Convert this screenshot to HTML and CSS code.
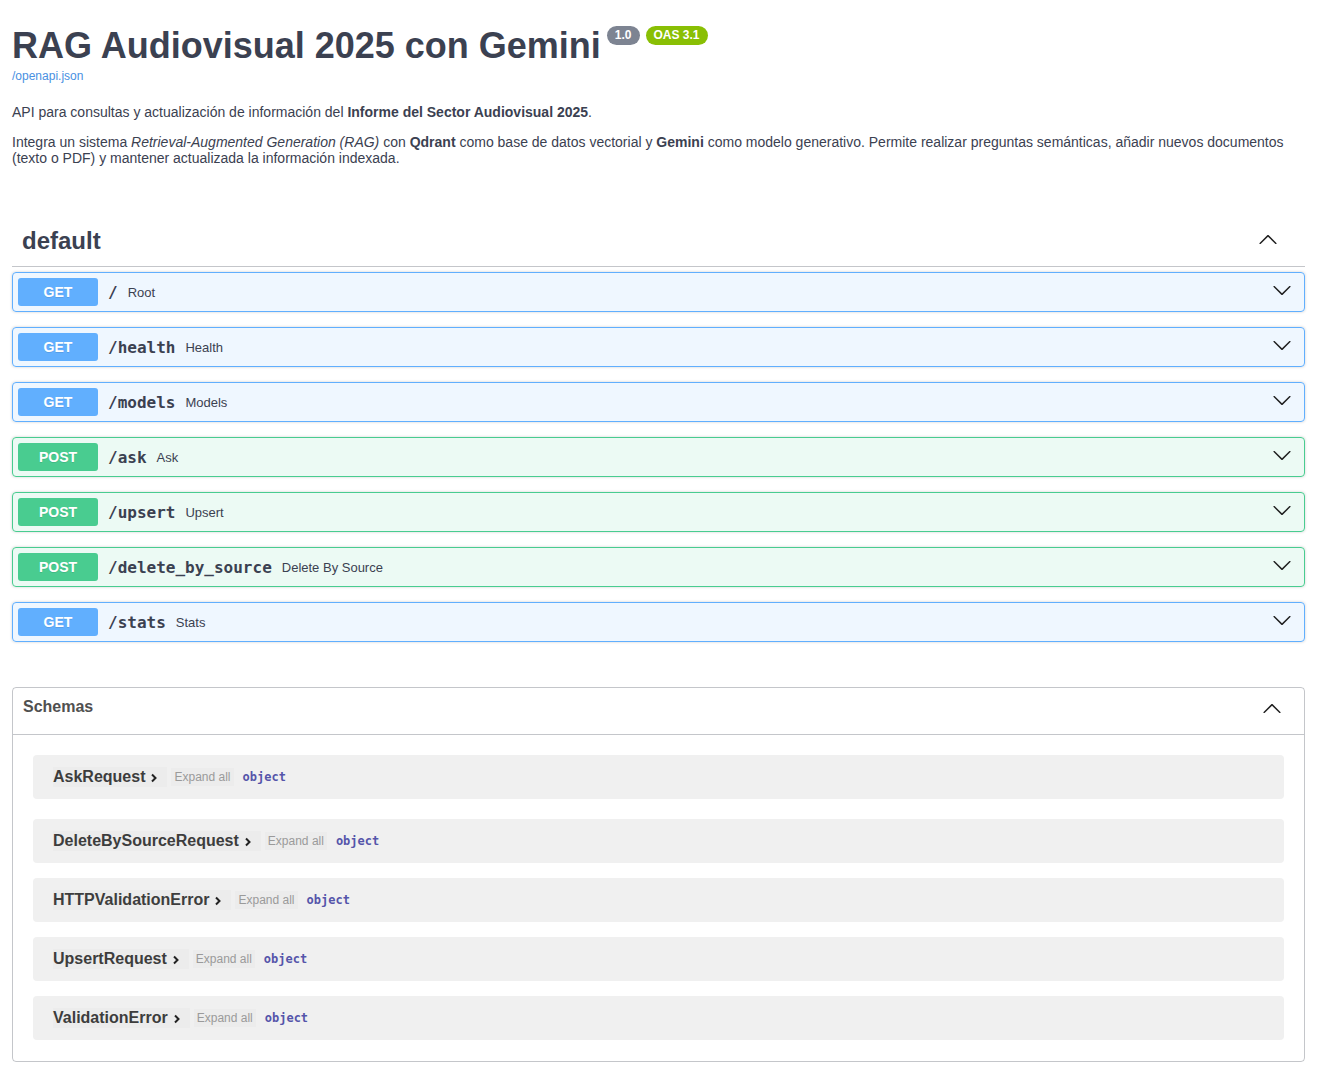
FILE: index.html
```html
<!DOCTYPE html>
<html lang="es">
<head>
<meta charset="utf-8">
<title>RAG Audiovisual 2025 con Gemini</title>
<link rel="stylesheet" href="styles.css">
</head>
<body>
<div class="wrapper">
  <section class="info">
    <div class="title-row">
      <h2 class="title">RAG Audiovisual 2025 con Gemini</h2>
      <span class="badge badge-version">1.0</span>
      <span class="badge badge-oas">OAS 3.1</span>
    </div>
    <a class="spec-link" href="#">/openapi.json</a>
    <p class="desc desc-first">API para consultas y actualización de información del <strong>Informe del Sector Audiovisual 2025</strong>.</p>
    <p class="desc">Integra un sistema <em>Retrieval-Augmented Generation (RAG)</em> con <strong>Qdrant</strong> como base de datos vectorial y <strong>Gemini</strong> como modelo generativo. Permite realizar preguntas semánticas, añadir nuevos documentos (texto o PDF) y mantener actualizada la información indexada.</p>
  </section>

  <section class="tag-section">
    <div class="tag-header">
      <h3 class="tag-name">default</h3>
      <svg class="arrow arrow-up" width="20" height="20" viewBox="0 0 20 20"><path d="M17.418 14.908c.272.268.709.268.979 0s.271-.701 0-.969l-7.908-7.83c-.27-.268-.707-.268-.979 0l-7.908 7.83c-.27.268-.27.701 0 .969.271.268.709.268.979 0L10 7.767l7.418 7.141z"/></svg>
    </div>

    <div class="opblock get">
      <span class="method">GET</span>
      <span class="path">/</span>
      <span class="summary">Root</span>
      <svg class="arrow arrow-down" width="20" height="20" viewBox="0 0 20 20"><path d="M17.418 6.109c.272-.268.709-.268.979 0s.271.701 0 .969l-7.908 7.83c-.27.268-.707.268-.979 0l-7.908-7.830c-.27-.268-.27-.701 0-.969.271-.268.709-.268.979 0L10 13.25l7.418-7.141z"/></svg>
    </div>
    <div class="opblock get">
      <span class="method">GET</span>
      <span class="path">/health</span>
      <span class="summary">Health</span>
      <svg class="arrow arrow-down" width="20" height="20" viewBox="0 0 20 20"><path d="M17.418 6.109c.272-.268.709-.268.979 0s.271.701 0 .969l-7.908 7.83c-.27.268-.707.268-.979 0l-7.908-7.83c-.27-.268-.27-.701 0-.969.271-.268.709-.268.979 0L10 13.25l7.418-7.141z"/></svg>
    </div>
    <div class="opblock get">
      <span class="method">GET</span>
      <span class="path">/models</span>
      <span class="summary">Models</span>
      <svg class="arrow arrow-down" width="20" height="20" viewBox="0 0 20 20"><path d="M17.418 6.109c.272-.268.709-.268.979 0s.271.701 0 .969l-7.908 7.83c-.27.268-.707.268-.979 0l-7.908-7.83c-.27-.268-.27-.701 0-.969.271-.268.709-.268.979 0L10 13.25l7.418-7.141z"/></svg>
    </div>
    <div class="opblock post">
      <span class="method">POST</span>
      <span class="path">/ask</span>
      <span class="summary">Ask</span>
      <svg class="arrow arrow-down" width="20" height="20" viewBox="0 0 20 20"><path d="M17.418 6.109c.272-.268.709-.268.979 0s.271.701 0 .969l-7.908 7.83c-.27.268-.707.268-.979 0l-7.908-7.83c-.27-.268-.27-.701 0-.969.271-.268.709-.268.979 0L10 13.25l7.418-7.141z"/></svg>
    </div>
    <div class="opblock post">
      <span class="method">POST</span>
      <span class="path">/upsert</span>
      <span class="summary">Upsert</span>
      <svg class="arrow arrow-down" width="20" height="20" viewBox="0 0 20 20"><path d="M17.418 6.109c.272-.268.709-.268.979 0s.271.701 0 .969l-7.908 7.83c-.27.268-.707.268-.979 0l-7.908-7.83c-.27-.268-.27-.701 0-.969.271-.268.709-.268.979 0L10 13.25l7.418-7.141z"/></svg>
    </div>
    <div class="opblock post">
      <span class="method">POST</span>
      <span class="path">/delete_by_source</span>
      <span class="summary">Delete By Source</span>
      <svg class="arrow arrow-down" width="20" height="20" viewBox="0 0 20 20"><path d="M17.418 6.109c.272-.268.709-.268.979 0s.271.701 0 .969l-7.908 7.83c-.27.268-.707.268-.979 0l-7.908-7.83c-.27-.268-.27-.701 0-.969.271-.268.709-.268.979 0L10 13.25l7.418-7.141z"/></svg>
    </div>
    <div class="opblock get">
      <span class="method">GET</span>
      <span class="path">/stats</span>
      <span class="summary">Stats</span>
      <svg class="arrow arrow-down" width="20" height="20" viewBox="0 0 20 20"><path d="M17.418 6.109c.272-.268.709-.268.979 0s.271.701 0 .969l-7.908 7.83c-.27.268-.707.268-.979 0l-7.908-7.83c-.27-.268-.27-.701 0-.969.271-.268.709-.268.979 0L10 13.25l7.418-7.141z"/></svg>
    </div>
  </section>

  <section class="models">
    <div class="models-header">
      <h4 class="models-title">Schemas</h4>
      <svg class="arrow arrow-up-sm" width="20" height="20" viewBox="0 0 20 20"><path d="M17.418 14.908c.272.268.709.268.979 0s.271-.701 0-.969l-7.908-7.83c-.27-.268-.707-.268-.979 0l-7.908 7.83c-.27.268-.27.701 0 .969.271.268.709.268.979 0L10 7.767l7.418 7.141z"/></svg>
    </div>
    <div class="models-list">
      <div class="model-row">
        <span class="model-toggle"><span class="model-title">AskRequest</span><svg class="chev" width="8" height="10" viewBox="0 0 8 10"><polyline points="2,1.5 5.5,5 2,8.5"/></svg></span>
        <span class="expand">Expand all</span>
        <span class="type">object</span>
      </div>
      <div class="model-row">
        <span class="model-toggle"><span class="model-title">DeleteBySourceRequest</span><svg class="chev" width="8" height="10" viewBox="0 0 8 10"><polyline points="2,1.5 5.5,5 2,8.5"/></svg></span>
        <span class="expand">Expand all</span>
        <span class="type">object</span>
      </div>
      <div class="model-row">
        <span class="model-toggle"><span class="model-title">HTTPValidationError</span><svg class="chev" width="8" height="10" viewBox="0 0 8 10"><polyline points="2,1.5 5.5,5 2,8.5"/></svg></span>
        <span class="expand">Expand all</span>
        <span class="type">object</span>
      </div>
      <div class="model-row">
        <span class="model-toggle"><span class="model-title">UpsertRequest</span><svg class="chev" width="8" height="10" viewBox="0 0 8 10"><polyline points="2,1.5 5.5,5 2,8.5"/></svg></span>
        <span class="expand">Expand all</span>
        <span class="type">object</span>
      </div>
      <div class="model-row">
        <span class="model-toggle"><span class="model-title">ValidationError</span><svg class="chev" width="8" height="10" viewBox="0 0 8 10"><polyline points="2,1.5 5.5,5 2,8.5"/></svg></span>
        <span class="expand">Expand all</span>
        <span class="type">object</span>
      </div>
    </div>
  </section>
</div>
</body>
</html>
```

FILE: styles.css
```css
* { box-sizing: border-box; }

body {
  margin: 0;
  background: #fff;
  color: #3b4151;
  font-family: "Liberation Sans", Arial, Helvetica, sans-serif;
}

.wrapper {
  padding: 24px 12px 40px 12px;
}

/* ---------- info ---------- */
.title-row {
  display: flex;
  align-items: flex-start;
  gap: 6px;
}

.title {
  margin: 0;
  font-size: 36px;
  line-height: 43px;
  font-weight: 700;
  color: #3b4151;
}

.badge {
  margin-top: 2px;
  padding: 2px 8px;
  border-radius: 57px;
  font-size: 12px;
  line-height: 15px;
  font-weight: 700;
  color: #fff;
}

.badge-version { background: #7d8492; }
.badge-oas { background: #89bf04; }

.spec-link {
  display: block;
  margin-top: 2px;
  font-size: 12px;
  line-height: 15px;
  color: #4990e2;
  text-decoration: none;
}

.desc {
  margin: 14px 0 0 0;
  font-size: 14px;
  line-height: 16px;
  color: #3b4151;
}

.desc-first { margin-top: 20px; }

/* ---------- tag section ---------- */
.tag-section {
  margin-top: 50px;
}

.tag-header {
  display: flex;
  align-items: center;
  height: 51px;
  padding: 0 27px 0 10px;
  border-bottom: 1px solid rgba(59, 65, 81, 0.3);
  margin-bottom: 5px;
}

.tag-name {
  margin: 0;
  font-size: 24px;
  font-weight: 700;
  color: #3b4151;
}

.arrow {
  fill: #1f1f1f;
  flex: none;
}

.arrow-up {
  margin-left: auto;
  margin-bottom: 5px;
}

.opblock {
  display: flex;
  align-items: center;
  height: 40px;
  padding: 0 5px;
  margin-bottom: 15px;
  border: 1px solid;
  border-radius: 4px;
  box-shadow: 0 0 3px rgba(0, 0, 0, 0.19);
}

.opblock.get {
  border-color: #61affe;
  background: rgba(97, 175, 254, 0.1);
}

.opblock.post {
  border-color: #49cc90;
  background: rgba(73, 204, 144, 0.1);
}

.method {
  min-width: 80px;
  padding: 6px 0;
  border-radius: 3px;
  text-align: center;
  font-size: 14px;
  line-height: 16px;
  font-weight: 700;
  color: #fff;
  text-shadow: 0 1px 0 rgba(0, 0, 0, 0.1);
}

.get .method { background: #61affe; }
.post .method { background: #49cc90; }

.path {
  padding: 0 10px;
  font-family: "DejaVu Sans Mono", "Liberation Mono", monospace;
  font-size: 16px;
  font-weight: 700;
  color: #3b4151;
}

.summary {
  font-size: 13px;
  color: #3b4151;
}

.arrow-down {
  margin-left: auto;
  margin-right: 7px;
  margin-bottom: 5px;
}

/* ---------- models ---------- */
.models {
  margin-top: 45px;
  border: 1px solid rgba(59, 65, 81, 0.3);
  border-radius: 4px;
}

.models-header {
  display: flex;
  align-items: flex-start;
  padding: 9px 22px 16px 10px;
  border-bottom: 1px solid rgba(59, 65, 81, 0.3);
}

.models-title {
  margin: 0;
  font-size: 16px;
  line-height: 20px;
  font-weight: 700;
  color: #505050;
}

.arrow-up-sm {
  margin-left: auto;
  margin-top: 1px;
}

.models-list {
  padding: 20px 20px 21px 20px;
}

.model-row {
  display: flex;
  align-items: center;
  height: 44px;
  padding: 0 20px;
  margin-bottom: 15px;
  border-radius: 4px;
  background: #f0f0f0;
}

.model-row:first-child { margin-bottom: 20px; }
.model-row:last-child { margin-bottom: 0; }

.model-toggle {
  display: flex;
  align-items: center;
  height: 20px;
  padding-right: 9px;
  background: #ececec;
}

.model-title {
  font-size: 16px;
  font-weight: 700;
  color: #3d3d3d;
}

.chev {
  margin-left: 5px;
  margin-top: 2px;
  fill: none;
  stroke: #222;
  stroke-width: 2;
}

.expand {
  margin-left: 4px;
  padding: 2px 3px;
  font-size: 12px;
  color: #9a9a9a;
  background: #ececec;
}

.type {
  margin-left: 9px;
  font-family: "DejaVu Sans Mono", "Liberation Mono", monospace;
  font-size: 12px;
  font-weight: 700;
  color: #55a;
}
```
